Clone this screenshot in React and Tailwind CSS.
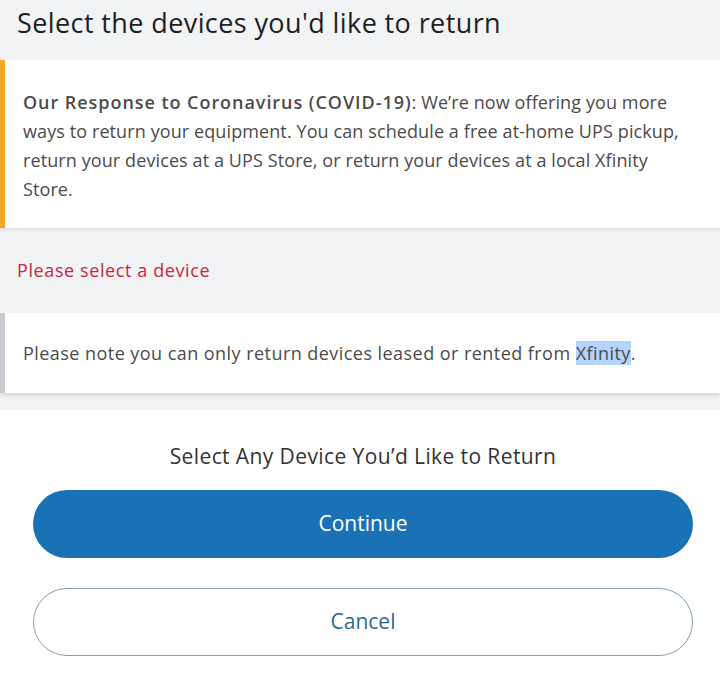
export default function App() {
  return (
    <div
      className="w-[720px] h-[699px] bg-white overflow-hidden"
      style={{ fontFamily: '"Open Sans", "Liberation Sans", sans-serif' }}
    >
      <div className="bg-[#f2f3f5]">
        <div className="h-[58px] flex items-center pl-[17px]">
          <h1 className="text-[27px] text-[#1f1f1f] tracking-[0.4px] leading-none -mt-[14px]">
            Select the devices you'd like to return
          </h1>
        </div>

        <div className="mt-[2px] bg-white border-l-[5px] border-[#f6a623] pl-[18px] pr-1 pt-[28px] pb-[24px] shadow-[0_2px_3px_rgba(0,0,0,0.08)]">
          <p className="text-[18px] leading-[29px] text-[#4b4b4b] tracking-[0.1px] whitespace-nowrap">
            <span className="font-semibold tracking-[0.95px]">Our Response to Coronavirus (COVID-19)</span>: We’re now offering you more
            <br />
            ways to return your equipment. You can schedule a free at-home UPS pickup,
            <br />
            return your devices at a UPS Store, or return your devices at a local Xfinity
            <br />
            Store.
          </p>
        </div>

        <div className="h-[85px] flex items-center pl-[17px]">
          <p className="text-[18px] text-[#c5283f] tracking-[0.6px]">Please select a device</p>
        </div>

        <div className="h-[80px] bg-white border-l-[5px] border-[#c9cdd2] flex items-center pl-[18px] shadow-[0_3px_4px_rgba(0,0,0,0.1)]">
          <p className="text-[18px] text-[#4b4b4b] tracking-[0.45px]">
            Please note you can only return devices leased or rented from{" "}
            <span className="bg-[#b3d4fc]">Xfinity</span>.
          </p>
        </div>
        <div className="h-[17px]" />
      </div>

      <div className="flex flex-col pl-[33px] pr-[27px] pt-[31px] text-center">
        <p className="text-[21px] text-[#333333] tracking-[0.4px] leading-[30px]">
          Select Any Device You’d Like to Return
        </p>
        <button className="mt-[19px] w-full h-[68px] rounded-full bg-[#1a72b6] text-white text-[21px]">
          Continue
        </button>
        <button className="mt-[30px] w-full h-[68px] rounded-full bg-white border-[1.5px] border-[#7f9db3] text-[#31688f] text-[21px]">
          Cancel
        </button>
      </div>
    </div>
  );
}
